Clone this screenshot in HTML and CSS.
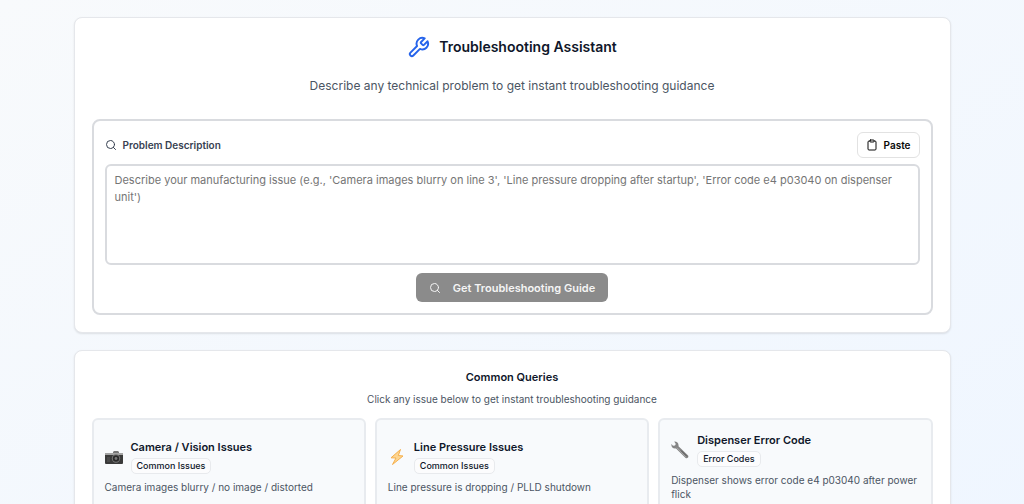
FILE: index.html
```
<!DOCTYPE html>
<html lang="en">
<head>
    <meta charset="UTF-8">
    <meta name="viewport" content="width=device-width, initial-scale=1.0">
    <title>Troubleshooting Assistant</title>
    <link rel="stylesheet" href="styles.css">
</head>
<body>
    <main class="container">
        <!-- Search -->
        <section class="card">
            <h1 class="title">
                <svg class="icon title-icon" viewBox="0 0 24 24"><path d="M14.7 6.3a1 1 0 0 0 0 1.4l1.6 1.6a1 1 0 0 0 1.4 0l3.77-3.77a6 6 0 0 1-7.94 7.94l-6.91 6.91a2.12 2.12 0 0 1-3-3l6.91-6.91a6 6 0 0 1 7.94-7.94l-3.76 3.76z"/></svg>
                Troubleshooting Assistant
            </h1>
            <p class="subtitle">Describe any technical problem to get instant troubleshooting guidance</p>

            <form class="problem-form">
                <div class="form-header">
                    <label class="form-label" for="problem">
                        <svg class="icon" viewBox="0 0 24 24"><circle cx="11" cy="11" r="8"/><path d="m21 21-4.3-4.3"/></svg>
                        Problem Description
                    </label>
                    <button class="paste-btn" type="button">
                        <svg class="icon" viewBox="0 0 24 24"><rect x="8" y="2" width="8" height="4" rx="1"/><path d="M16 4h2a2 2 0 0 1 2 2v14a2 2 0 0 1-2 2H6a2 2 0 0 1-2-2V6a2 2 0 0 1 2-2h2"/></svg>
                        Paste
                    </button>
                </div>
                <textarea id="problem" class="problem-input" placeholder="Describe your manufacturing issue (e.g., 'Camera images blurry on line 3', 'Line pressure dropping after startup', 'Error code e4 p03040 on dispenser unit')"></textarea>
                <button class="submit-btn" type="submit" disabled>
                    <svg class="icon" viewBox="0 0 24 24"><circle cx="11" cy="11" r="8"/><path d="m21 21-4.3-4.3"/></svg>
                    Get Troubleshooting Guide
                </button>
            </form>
        </section>

        <!-- Common queries -->
        <section class="card">
            <h2 class="queries-title">Common Queries</h2>
            <p class="queries-text">Click any issue below to get instant troubleshooting guidance</p>
            <div class="query-grid">
                <button class="query" type="button">
                    <span class="query-head">
                        <svg class="emoji" viewBox="0 0 18 18">
                            <path d="M8 4l1-1h4l1 1v2H8z" fill="#777"/>
                            <rect y="5" width="18" height="11" rx="1" fill="#3a3a3a"/>
                            <path d="M0 5h18v2H0z" fill="#a3a3a3"/>
                            <circle cx="11" cy="10.5" r="4.2" fill="#777"/>
                            <circle cx="11" cy="10.5" r="3.2" fill="#2a2a2a"/>
                            <circle cx="11" cy="10.5" r="1.4" fill="#777"/>
                            <path d="M2 9h3v5H2z" fill="#4a4a4a"/>
                        </svg>
                        <span>
                            <span class="query-name">Camera / Vision Issues</span>
                            <span class="badge">Common Issues</span>
                        </span>
                    </span>
                    <span class="query-text">Camera images blurry / no image / distorted</span>
                </button>
                <button class="query" type="button">
                    <span class="query-head">
                        <svg class="emoji" viewBox="0 0 18 18">
                            <path d="M12.500 1.500 3 9.800l5 .2L4.500 16.500 15 8l-4.700-.5z" fill="#fdd591" stroke="#f6b04c" stroke-width="1"/>
                        </svg>
                        <span>
                            <span class="query-name">Line Pressure Issues</span>
                            <span class="badge">Common Issues</span>
                        </span>
                    </span>
                    <span class="query-text">Line pressure is dropping / PLLD shutdown</span>
                </button>
                <button class="query" type="button">
                    <span class="query-head">
                        <svg class="emoji" viewBox="0 0 18 18">
                            <path d="M3.2.5 4.8 3 4 4.6 2 4.7.4 3C0 6 2 8 5 7.4L14.6 17c1.5 1 3.5-.6 2.5-2.4L7.500 5.200C8 2.500 6 .3 3.200.5z" fill="#858585"/>
                            <path d="m6 6.800 9 9" stroke="#b5b5b5" stroke-width=".8"/>
                            <path d="m10 9.500 6 6" stroke="#555" stroke-width="1"/>
                        </svg>
                        <span>
                            <span class="query-name">Dispenser Error Code</span>
                            <span class="badge">Error Codes</span>
                        </span>
                    </span>
                    <span class="query-text">Dispenser shows error code e4 p03040 after power flick</span>
                </button>
            </div>
        </section>
    </main>
</body>
</html>
```
FILE: styles.css
```
* {
    box-sizing: border-box;
}
body {
    margin: 0;
    min-height: 100vh;
    background: linear-gradient(to bottom right, #f8fafc, #eff6ff);
    font-family: Inter, sans-serif;
    color: #0f172a;
}
h1, h2, p {
    margin: 0;
}
button, textarea {
    font-family: inherit;
}
.container {
    max-width: 913px;
    margin: 0 auto;
    padding: 17px 18px;
    display: flex;
    flex-direction: column;
    gap: 17px;
}
.card {
    background: white;
    border: 1px solid #e5e7eb;
    border-radius: 8px;
    padding: 17px;
    box-shadow: 0 1px 2px rgba(0, 0, 0, 0.1);
}
.icon {
    width: 12px;
    height: 12px;
    flex-shrink: 0;
    fill: none;
    stroke: currentColor;
    stroke-width: 2;
    stroke-linecap: round;
    stroke-linejoin: round;
}
.title {
    display: flex;
    align-items: center;
    justify-content: center;
    gap: 9px;
    font-size: 14px;
    line-height: 24px;
    font-weight: 600;
}
.title-icon {
    width: 23px;
    height: 23px;
    color: #2563eb;
}
.subtitle {
    margin-top: 16px;
    text-align: center;
    font-size: 12px;
    line-height: 22px;
    color: #4b5563;
}
.problem-form {
    margin-top: 22px;
    padding: 11px;
    border: 2px solid #d9dbdf;
    border-radius: 8px;
    display: flex;
    flex-direction: column;
}
.form-header {
    display: flex;
    align-items: center;
    justify-content: space-between;
}
.form-label {
    display: flex;
    align-items: center;
    gap: 6px;
    font-size: 10px;
    font-weight: 600;
    color: #374151;
}
.paste-btn {
    display: flex;
    align-items: center;
    gap: 6px;
    height: 26px;
    padding: 0 8px;
    background: white;
    border: 1px solid #e2e2e2;
    border-radius: 6px;
    font-size: 10px;
    font-weight: 600;
    color: #0a0a0a;
    cursor: pointer;
}
.problem-input {
    height: 101px;
    margin-top: 6px;
    padding: 6px 8px;
    border: 2px solid #d9dbdf;
    border-radius: 6px;
    resize: none;
    font-size: 11px;
    line-height: 17px;
}
.problem-input::placeholder {
    color: #757575;
}
.submit-btn {
    align-self: center;
    display: flex;
    align-items: center;
    gap: 12px;
    height: 29px;
    margin-top: 8px;
    padding: 0 13px;
    background: #8b8b8b;
    border: none;
    border-radius: 6px;
    font-size: 11px;
    font-weight: 600;
    color: #f5f5f5;
}
.queries-title {
    text-align: center;
    font-size: 11px;
    line-height: 18px;
    font-weight: 600;
}
.queries-text {
    margin-top: 5px;
    text-align: center;
    font-size: 10px;
    line-height: 16px;
    color: #4b5563;
}
.query-grid {
    display: grid;
    grid-template-columns: repeat(3, 1fr);
    gap: 9px;
    margin-top: 11px;
}
.query {
    padding: 12px 11px;
    background: #f8fafc;
    border: 2px solid #e8ebef;
    border-radius: 6px;
    text-align: left;
    color: inherit;
    cursor: pointer;
}
.query-head {
    display: flex;
    align-items: center;
    gap: 8px;
}
.emoji {
    width: 18px;
    height: 18px;
    flex-shrink: 0;
}
.query-name {
    display: block;
    font-size: 11px;
    line-height: 17px;
    font-weight: 600;
}
.badge {
    display: inline-block;
    margin-top: 2px;
    padding: 0 5px;
    background: #fcfcfd;
    border: 1px solid #e8eaed;
    border-radius: 5px;
    font-size: 9px;
    line-height: 14px;
    font-weight: 500;
}
.query-text {
    display: block;
    margin-top: 6px;
    font-size: 10px;
    line-height: 14px;
    color: #4b5563;
}
```
